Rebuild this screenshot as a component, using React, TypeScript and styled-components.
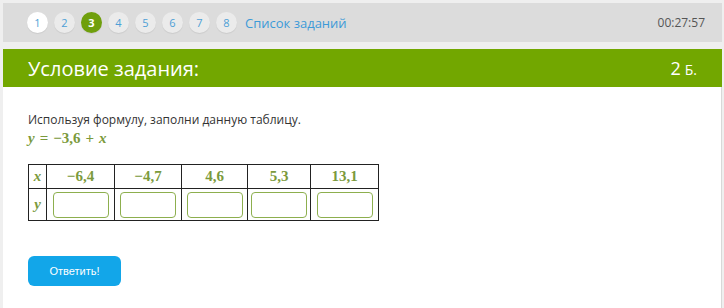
import React from 'react';
import styled, { createGlobalStyle } from 'styled-components';

const GlobalStyle = createGlobalStyle`
    body {
        margin: 0;
        background: #efefef;
        font-family: "Open Sans", "Liberation Sans", sans-serif;
    }
`

const Page = styled.div`
    padding: 3px 2px 0 3px;
    height: 305px;
    display: flex;
    flex-direction: column;
`

const TopBar = styled.div`
    height: 39px;
    background: #dcdcdc;
    display: flex;
    align-items: center;
    padding: 0 17px 0 24px;
`

const Steps = styled.div`
    display: flex;
    align-items: center;
    gap: 6px;
`

const Step = styled.div<{ $state?: 'done' | 'current' }>`
    width: 21px;
    height: 21px;
    border-radius: 50%;
    display: flex;
    align-items: center;
    justify-content: center;
    font-size: 11px;
    background: ${p => p.$state === 'current' ? '#6f9f0c' : p.$state === 'done' ? '#ffffff' : '#ebebeb'};
    color: ${p => p.$state === 'current' ? '#ffffff' : '#4d9fd6'};
    font-weight: ${p => p.$state === 'current' ? 700 : 400};
    box-shadow: 0 1px 1px rgba(0, 0, 0, 0.08);
`

const TaskList = styled.a`
    margin-left: 8px;
    font-size: 13px;
    color: #3c9ad8;
`

const Timer = styled.div`
    margin-left: auto;
    font-size: 12px;
    color: #555;
`

const Header = styled.div`
    margin-top: 7px;
    height: 38px;
    background: #72a700;
    color: #fff;
    display: flex;
    align-items: center;
    padding: 0 25px;
`

const Title = styled.div`
    font-size: 20px;
`

const Points = styled.div`
    margin-left: auto;
    font-size: 18px;
    span {
        font-size: 14px;
        margin-left: 4px;
    }
`

const Content = styled.div`
    flex: 1;
    background: #fff;
    border-right: 1px solid #d8d8d8;
    padding: 25px 25px 0;
`

const Text = styled.div`
    font-size: 12px;
    color: #333;
    line-height: 16px;
`

const Formula = styled.div`
    font-family: "Liberation Serif", "DejaVu Serif", serif;
    font-weight: 700;
    color: #7b9a3c;
    font-size: 15px;
    margin-top: 2px;
    i {
        font-style: italic;
    }
`

const Op = styled.span`
    margin: 0 5px;
`

const Table = styled.table`
    margin-top: 17px;
    border-collapse: collapse;
    font-family: "Liberation Serif", "DejaVu Serif", serif;
    font-weight: 700;
    color: #7b9a3c;
    font-size: 15px;
`

const Cell = styled.td<{ $w?: number; $tall?: boolean }>`
    border: 1px solid #222;
    width: ${p => p.$w ? p.$w : 17}px;
    height: ${p => p.$tall ? 31 : 23}px;
    text-align: center;
    padding: 0;
    i {
        font-style: italic;
    }
`

const Input = styled.input`
    width: 56px;
    height: 26px;
    box-sizing: border-box;
    border: 1px solid #8daf4e;
    border-radius: 4px;
    display: block;
    margin: 0 auto;
`

const Button = styled.button`
    margin-top: 35px;
    width: 93px;
    height: 30px;
    border: none;
    border-radius: 6px;
    background: #12a6e9;
    color: #fff;
    font-size: 11px;
    font-family: "Liberation Sans", sans-serif;
    display: block;
`

const values = ['−6,4', '−4,7', '4,6', '5,3', '13,1'];
const widths = [67, 66, 65, 62, 67];

const App = () => {
    return (
        <>
            <GlobalStyle />
            <Page>
                <TopBar>
                    <Steps>
                        {[1, 2, 3, 4, 5, 6, 7, 8].map(n => (
                            <Step key={n} $state={n === 1 ? 'done' : n === 3 ? 'current' : undefined}>{n}</Step>
                        ))}
                    </Steps>
                    <TaskList>Список заданий</TaskList>
                    <Timer>00:27:57</Timer>
                </TopBar>
                <Header>
                    <Title>Условие задания:</Title>
                    <Points>2<span>Б.</span></Points>
                </Header>
                <Content>
                    <Text>Используя формулу, заполни данную таблицу.</Text>
                    <Formula><i>y</i><Op>=</Op>−3,6<Op>+</Op><i>x</i></Formula>
                    <Table>
                        <tbody>
                            <tr>
                                <Cell><i>x</i></Cell>
                                {values.map((v, i) => <Cell key={v} $w={widths[i]}>{v}</Cell>)}
                            </tr>
                            <tr>
                                <Cell $tall><i>y</i></Cell>
                                {values.map((v, i) => (
                                    <Cell key={v} $w={widths[i]} $tall><Input /></Cell>
                                ))}
                            </tr>
                        </tbody>
                    </Table>
                    <Button>Ответить!</Button>
                </Content>
            </Page>
        </>
    );
};

export default App;
